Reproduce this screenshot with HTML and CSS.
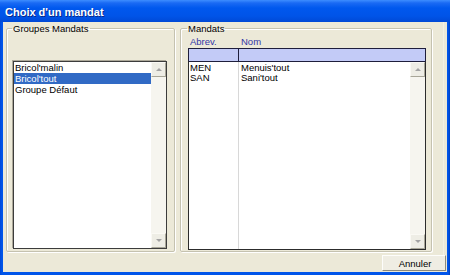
FILE: index.html
```html
<!DOCTYPE html>
<html lang="fr">
<head>
<meta charset="utf-8">
<title>Choix d'un mandat</title>
<link rel="stylesheet" href="styles.css">
</head>
<body>
<div class="window">
  <div class="titlebar"><span class="title">Choix d'un mandat</span></div>
  <div class="frame">
    <div class="client">
      <div class="panes">
        <fieldset class="group group-left">
          <legend>Groupes Mandats</legend>
          <div class="listbox">
            <div class="items">
              <div class="item">Bricol'malin</div>
              <div class="item sel">Bricol'tout</div>
              <div class="item">Groupe Défaut</div>
            </div>
            <div class="vscroll">
              <div class="sbtn"><span class="arrow up"></span></div>
              <div class="track"></div>
              <div class="sbtn"><span class="arrow down"></span></div>
            </div>
          </div>
        </fieldset>
        <fieldset class="group group-right">
          <legend>Mandats</legend>
          <div class="colheads">
            <span class="ch c1">Abrev.</span>
            <span class="ch">Nom</span>
          </div>
          <div class="filterrow">
            <div class="fc c1"></div>
            <div class="fc"></div>
          </div>
          <div class="listview">
            <div class="lvbody">
              <div class="col c1">
                <div class="cell">MEN</div>
                <div class="cell">SAN</div>
              </div>
              <div class="col">
                <div class="cell">Menuis'tout</div>
                <div class="cell">Sani'tout</div>
              </div>
            </div>
            <div class="vscroll">
              <div class="sbtn"><span class="arrow up"></span></div>
              <div class="track"></div>
              <div class="sbtn"><span class="arrow down"></span></div>
            </div>
          </div>
        </fieldset>
      </div>
      <div class="footer">
        <button class="btn" type="button">Annuler</button>
      </div>
    </div>
  </div>
</div>
</body>
</html>
```

FILE: styles.css
```css
* { box-sizing: border-box; }
html, body { margin: 0; padding: 0; background: #ffffff; }
body {
  font-family: "Liberation Sans", Arial, sans-serif;
  font-size: 9.5px;
  color: #000;
}
.window {
  width: 450px;
  height: 275px;
  display: flex;
  flex-direction: column;
  background: #0055ea;
}
.titlebar {
  height: 22px;
  flex: none;
  display: flex;
  align-items: center;
  padding-left: 5px;
  background: linear-gradient(#3d8dff 0px, #1a6af4 3px, #0058ee 8px, #0054e8 16px, #0049d6 22px);
}
.title {
  color: #fff;
  font-weight: bold;
  font-size: 11px;
  text-shadow: 1px 1px 0 #0a2a8a;
  padding-top: 1px;
}
.frame {
  flex: 1;
  padding: 0 3px 3px 3px;
  background: linear-gradient(90deg, #0048d8, #0055ea 2px, #0055ea calc(100% - 2px), #0040c0);
  display: flex;
}
.client {
  flex: 1;
  background: #ece9d8;
  display: flex;
  flex-direction: column;
  box-shadow: inset -3px 0 0 #ece9d8, inset -4px 0 0 #f3f1e6;
}
.panes {
  height: 230px;
  padding: 1px 0 0 3px;
  display: flex;
  gap: 5px;
}
.group {
  margin: 0;
  height: 229px;
  border: 1px solid #c5c2b0;
  box-shadow: inset 1px 1px 0 #fff, 1px 1px 0 #fff;
  border-radius: 2px;
  padding: 0;
}
.group legend {
  line-height: 11px;
  padding: 0 1px;
  margin-left: -1px;
}
.group-left { width: 169px; padding: 0 0 0 6px; }
.group-right { width: 252px; padding: 0 0 0 7px; }

.listbox {
  margin-top: 27px;
  width: 154px;
  height: 188px;
  border: 1px solid #3c3c3c;
  box-shadow: -1px -1px 0 #aca899;
  background: #fff;
  display: flex;
}
.items { flex: 1; padding-top: 0; }
.item {
  line-height: 11px;
  height: 11px;
  padding-left: 1px;
  white-space: nowrap;
}
.item.sel { background: #316ac5; color: #fff; }

.vscroll {
  width: 15px;
  flex: none;
  display: flex;
  flex-direction: column;
  background: #f6f5ef;
}
.track { flex: 1; }
.sbtn {
  height: 15px;
  flex: none;
  background: #eeede5;
  border: 1px solid;
  border-color: #faf9f4 #a8a698 #a8a698 #faf9f4;
  display: flex;
  align-items: center;
  justify-content: center;
}
.arrow { width: 0; height: 0; border-left: 3px solid transparent; border-right: 3px solid transparent; }
.arrow.up { border-bottom: 3px solid #a3a3a3; }
.arrow.down { border-top: 3px solid #a3a3a3; }

.colheads {
  height: 12px;
  margin-top: 2px;
  display: flex;
  line-height: 11px;
  color: #3236a6;
}
.ch { padding-left: 2px; }
.c1 { width: 51px; flex: none; }
.filterrow {
  width: 238px;
  height: 14px;
  border: 1px solid #1e1e3c;
  background: #c3cbf7;
  display: flex;
}
.filterrow .c1 { width: 50px; border-right: 1px solid #1e1e3c; }
.listview {
  width: 238px;
  height: 189px;
  margin-top: -1px;
  border: 1px solid #2c2c2c;
  border-top-color: #1e1e3c;
  background: #fff;
  display: flex;
}
.lvbody { flex: 1; display: flex; }
.col { flex: 1; padding-top: 1px; }
.col.c1 { width: 50px; flex: none; border-right: 1px solid #d8d8d8; }
.cell { line-height: 10px; height: 10px; padding-left: 1px; white-space: nowrap; }
.col + .col .cell { padding-left: 2px; }

.footer {
  flex: 1;
  display: flex;
  justify-content: flex-end;
  align-items: flex-start;
  padding: 3px 1px 0 0;
}
.btn {
  width: 64px;
  height: 16px;
  font-family: "Liberation Sans", Arial, sans-serif;
  font-size: 9.5px;
  color: #000;
  background: #efede3;
  border: 1px solid;
  border-color: #fdfdfb #8c8a7e #8c8a7e #fdfdfb;
  padding: 0 0 0 2px;
  line-height: 13px;
}
```
